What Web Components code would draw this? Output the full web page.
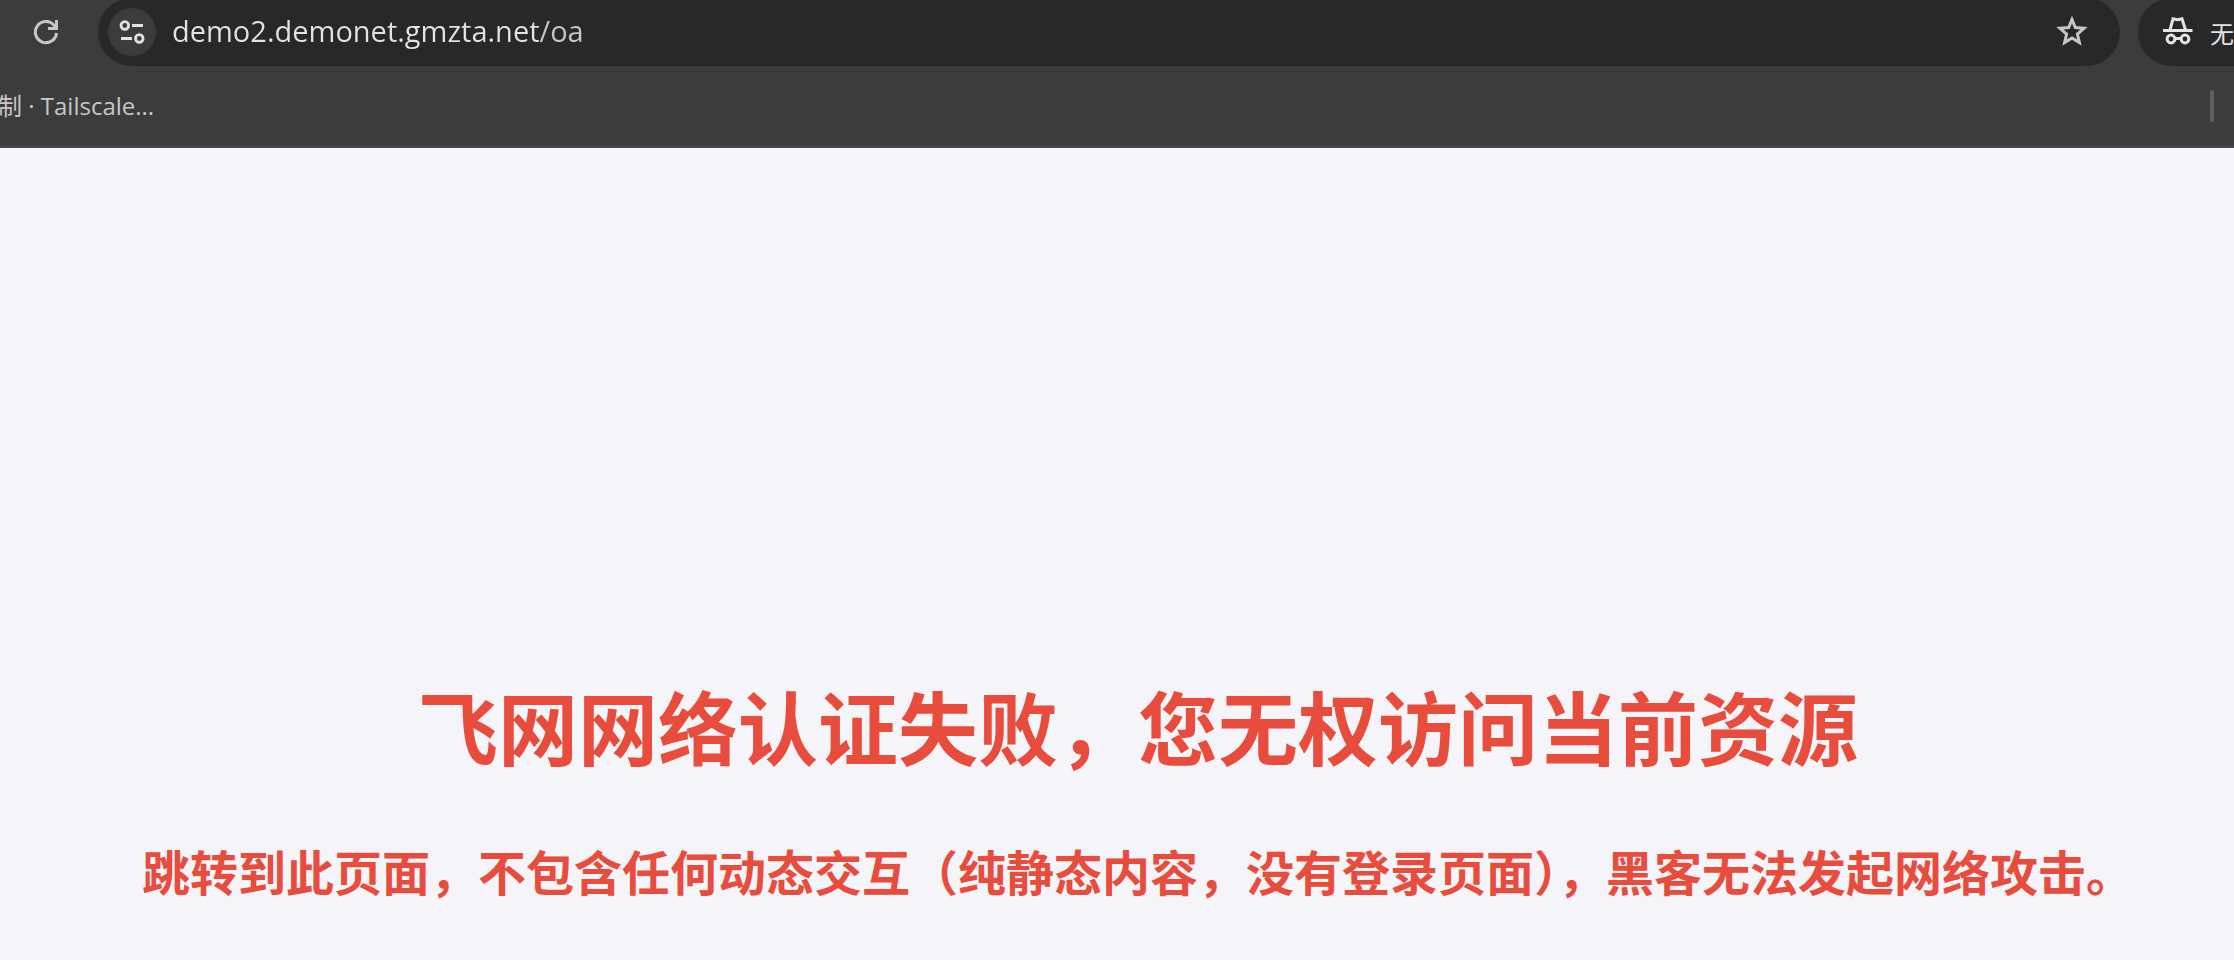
<!DOCTYPE html>
<html lang="zh-CN">
<head>
<meta charset="UTF-8">
<meta name="viewport" content="width=device-width, initial-scale=1">
<title>飞网网络认证失败</title>
<style>
    :root {
        --bar: #3c3c3c;
        --field: #282828;
        --line: #474747;
        --icon: #c7c7c7;
        --text: #e3e3e3;
        --page: #f4f4f9;
        --danger: #e74c3c;
    }

    body {
        margin: 0;
        min-height: 100vh;
        display: flex;
        flex-direction: column;
        overflow: hidden;
        background: var(--page);
        font-family: "Open Sans", "Noto Sans CJK SC", sans-serif;
    }
</style>
</head>
<body>
<browser-chrome>
    <address-bar url="demo2.demonet.gmzta.net/oa"></address-bar>
    <incognito-chip slot="end">无</incognito-chip>
    <bookmarks-bar slot="bookmarks">制 · Tailscale...</bookmarks-bar>
</browser-chrome>
<denied-message>
    <span slot="title">飞网网络认证失败，您无权访问当前资源</span>
    <span>跳转到此页面，不包含任何动态交互（纯静态内容，没有登录页面），黑客无法发起网络攻击。</span>
</denied-message>

<script>
    // Shared shadow root setup
    class BaseElement extends HTMLElement {
        constructor() {
            super();
            this.attachShadow({ mode: 'open' });
            this.shadowRoot.innerHTML = this.template();
        }
    }

    /**
     * BrowserChrome
     * Toolbar row plus bookmarks row.
     * Slots: default (address), end (profile chip), bookmarks
     */
    class BrowserChrome extends BaseElement {
        template() {
            return `
                <style>
                    :host {
                        display: block;
                        background: var(--bar);
                        border-bottom: 2px solid var(--line);
                    }

                    .toolbar {
                        display: flex;
                        align-items: center;
                        height: 64px;
                        padding-left: 28px;
                        gap: 18px;
                    }

                    .reload {
                        display: flex;
                        flex: none;
                        margin-right: 16px;
                        padding: 0;
                        border: 0;
                        background: none;
                        color: var(--icon);
                    }
                </style>
                <div class="toolbar">
                    <button class="reload" aria-label="重新加载">
                        <svg width="36" height="40" viewBox="0 0 36 40" fill="none" stroke="currentColor" stroke-width="3">
                            <path d="M28.5 21A10.6 10.6 0 1 1 26 13.2L28.5 16.5"/>
                            <path d="M28.5 8V16.5H20"/>
                        </svg>
                    </button>
                    <slot></slot>
                    <slot name="end"></slot>
                </div>
                <slot name="bookmarks"></slot>
            `;
        }
    }

    /**
     * AddressBar
     * Attributes:
     * - url: address text, the path is drawn dimmer than the host
     */
    class AddressBar extends BaseElement {
        template() {
            return `
                <style>
                    :host {
                        display: flex;
                        flex: 1;
                        align-items: center;
                        box-sizing: border-box;
                        height: 68px;
                        padding: 0 28px 0 10px;
                        border-radius: 34px;
                        background: var(--field);
                    }

                    button {
                        display: flex;
                        flex: none;
                        padding: 0;
                        border: 0;
                        background: none;
                        color: var(--icon);
                    }

                    .site {
                        border-radius: 50%;
                        background: var(--bar);
                        color: var(--text);
                    }

                    input {
                        flex: 1;
                        min-width: 0;
                        height: 44px;
                        padding: 0 0 4px;
                        margin: 0 16px;
                        border: 0;
                        outline: 0;
                        font: 29px "Open Sans", "Noto Sans CJK SC", sans-serif;
                        color: transparent;
                        background: linear-gradient(90deg, var(--text) var(--host-width, 100%), var(--icon) 0);
                        -webkit-background-clip: text;
                        background-clip: text;
                    }
                </style>
                <button class="site" aria-label="查看网站信息">
                    <svg width="48" height="48" viewBox="0 0 48 48" fill="none" stroke="currentColor" stroke-width="2.8">
                        <circle cx="16.8" cy="17.5" r="3.8"/>
                        <path d="M24 17.5H35M13 30.5H24"/>
                        <circle cx="31.3" cy="30.5" r="3.8"/>
                    </svg>
                </button>
                <input type="text" aria-label="地址栏" spellcheck="false">
                <button aria-label="为此标签页添加书签">
                    <svg width="40" height="40" viewBox="0 0 40 40" fill="none" stroke="currentColor" stroke-width="3">
                        <path d="M20 7.5L23.3 15.6L32 16.3L25.4 22L27.4 30.6L20 26L12.6 30.6L14.6 22L8 16.3L16.7 15.6Z"/>
                    </svg>
                </button>
            `;
        }

        connectedCallback() {
            const url = this.getAttribute('url') || '';
            const input = this.shadowRoot.querySelector('input');
            input.value = url;

            const ctx = document.createElement('canvas').getContext('2d');
            ctx.font = getComputedStyle(input).font;
            const host = ctx.measureText(url.split('/')[0]).width;
            input.style.setProperty('--host-width', `${Math.round(host)}px`);
        }
    }

    /**
     * IncognitoChip
     * Runs off the right edge of the window.
     */
    class IncognitoChip extends BaseElement {
        template() {
            return `
                <style>
                    :host {
                        display: block;
                        flex: none;
                    }

                    button {
                        display: flex;
                        align-items: center;
                        gap: 12px;
                        height: 68px;
                        padding: 0 0 0 20px;
                        border: 0;
                        border-radius: 34px 0 0 34px;
                        background: var(--field);
                        color: var(--text);
                        font: 24px "Noto Sans CJK SC", sans-serif;
                    }
                </style>
                <button>
                    <svg width="40" height="40" viewBox="0 0 40 40" fill="none" stroke="currentColor" stroke-width="3">
                        <path d="M5 18.5H34.5"/>
                        <path d="M12 18L15 6.8L19.5 7.8L24 6.8L27.5 18"/>
                        <circle cx="13" cy="27" r="3.9"/>
                        <circle cx="27" cy="27" r="3.9"/>
                        <path d="M16.5 26.5H23.5"/>
                    </svg>
                    <slot></slot>
                </button>
            `;
        }
    }

    class BookmarksBar extends BaseElement {
        template() {
            return `
                <style>
                    :host {
                        display: flex;
                        align-items: center;
                        justify-content: space-between;
                        box-sizing: border-box;
                        height: 82px;
                        padding: 2px 20px 0 0;
                    }

                    a {
                        margin-left: -2px;
                        color: var(--icon);
                        font-size: 24px;
                        line-height: 32px;
                        text-decoration: none;
                        white-space: nowrap;
                    }

                    .divider {
                        width: 4px;
                        height: 32px;
                        border-radius: 2px;
                        background: #5f5f5f;
                    }
                </style>
                <a href="#"><slot></slot></a>
                <span class="divider"></span>
            `;
        }
    }

    /**
     * DeniedMessage
     * Slots: title, default (explanation)
     */
    class DeniedMessage extends BaseElement {
        template() {
            return `
                <style>
                    :host {
                        display: flex;
                        flex: 1;
                        flex-direction: column;
                        justify-content: flex-end;
                        gap: 62px;
                        padding: 0 0 54px 42px;
                        color: var(--danger);
                        font-family: "Noto Sans CJK SC", sans-serif;
                        font-weight: 700;
                        text-align: center;
                        white-space: nowrap;
                    }

                    h1, p {
                        margin: 0;
                    }

                    h1 {
                        font-size: 80px;
                        line-height: 96px;
                    }

                    p {
                        font-size: 48px;
                        line-height: 72px;
                    }
                </style>
                <h1><slot name="title"></slot></h1>
                <p><slot></slot></p>
            `;
        }
    }

    customElements.define('browser-chrome', BrowserChrome);
    customElements.define('address-bar', AddressBar);
    customElements.define('incognito-chip', IncognitoChip);
    customElements.define('bookmarks-bar', BookmarksBar);
    customElements.define('denied-message', DeniedMessage);
</script>
</body>
</html>
